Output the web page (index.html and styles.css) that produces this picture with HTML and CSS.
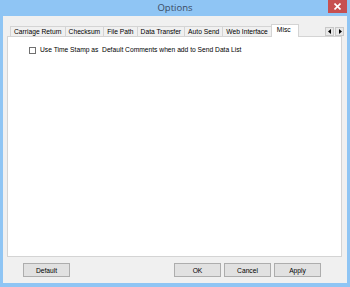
FILE: index.html
```html
<!DOCTYPE html>
<html>
<head>
<meta charset="utf-8">
<link rel="stylesheet" href="styles.css">
</head>
<body>
<div class="window">
  <div class="titlebar">
    <span></span>
    <span class="title">Options</span>
    <span class="close"><svg width="7" height="7" viewBox="0 0 7 7"><path d="M0.5 0.5L6.5 6.5M6.5 0.5L0.5 6.5" stroke="#fff" stroke-width="1.6"/></svg></span>
  </div>
  <div class="client">
    <div class="tabrow">
      <div class="tabs">
        <div class="tab">Carriage Return</div>
        <div class="tab">Checksum</div>
        <div class="tab">File Path</div>
        <div class="tab">Data Transfer</div>
        <div class="tab">Auto Send</div>
        <div class="tab">Web Interface</div>
        <div class="tab active">Misc</div>
      </div>
      <div class="arrows">
        <span class="arr"><svg width="4" height="5" viewBox="0 0 4 5"><path d="M3 0L0 2.5L3 5Z" fill="#000"/></svg></span>
        <span class="arr"><svg width="4" height="5" viewBox="0 0 4 5"><path d="M1 0L4 2.5L1 5Z" fill="#000"/></svg></span>
      </div>
    </div>
    <div class="panel">
      <label class="check"><span class="box"></span><span>Use Time Stamp as&nbsp; Default Comments when add to Send Data List</span></label>
    </div>
    <div class="buttons">
      <button class="btn">Default</button>
      <span class="spacer"></span>
      <button class="btn">OK</button>
      <button class="btn">Cancel</button>
      <button class="btn">Apply</button>
    </div>
  </div>
</div>
</body>
</html>
```

FILE: styles.css
```css
* { box-sizing: border-box; }
html, body { margin: 0; padding: 0; }
body {
  width: 350px;
  height: 287px;
  background: #8fc5f4;
  font-family: "Liberation Sans", Arial, sans-serif;
  font-size: 6.7px;
  color: #000;
  overflow: hidden;
}
.window {
  display: flex;
  flex-direction: column;
  height: 287px;
  padding: 0 3px 4px 3px;
}
.titlebar {
  height: 16px;
  display: grid;
  grid-template-columns: 1fr auto 1fr;
  align-items: start;
}
.title {
  font-family: "Open Sans", "Noto Sans", sans-serif;
  font-size: 9.5px;
  color: #3a4a63;
  line-height: 16px;
}
.close {
  justify-self: end;
  width: 19px;
  height: 13px;
  background: #c75050;
  display: flex;
  align-items: center;
  justify-content: center;
}
.client {
  flex: 1;
  background: #f0f0f0;
  display: flex;
  flex-direction: column;
  padding: 8px 4px 6px 4px;
}
.tabrow {
  height: 12px;
  display: flex;
  align-items: flex-end;
  padding-left: 3px;
  position: relative;
  z-index: 1;
}
.tabs {
  display: flex;
  align-items: flex-end;
  flex: 1;
}
.tab {
  height: 10px;
  padding: 0 3px;
  border: 1px solid #d4d4d4;
  border-bottom: none;
  border-right: none;
  background: #f0f0f0;
  line-height: 9px;
  white-space: nowrap;
}
.tab.active {
  height: 13px;
  margin-bottom: -1px;
  background: #fff;
  border-right: 1px solid #d4d4d4;
  padding: 0 7px 0 5px;
  line-height: 10px;
}
.arrows {
  display: flex;
  gap: 1px;
  align-self: center;
  margin-top: 2px;
  margin-right: -1px;
}
.arr {
  width: 9px;
  height: 9px;
  border: 1px solid #c8c8c8;
  background: #e8e8e8;
  display: flex;
  align-items: center;
  justify-content: center;
}
.panel {
  height: 221px;
  background: #fff;
  border: 1px solid #d4d4d4;
  margin-right: 1px;
  padding: 9px 0 0 21px;
}
.check {
  display: flex;
  align-items: center;
  gap: 4px;
  line-height: 8px;
}
.box {
  width: 7px;
  height: 7px;
  border: 1px solid #707070;
  background: #fff;
}
.buttons {
  margin-top: 6px;
  display: flex;
  gap: 3px;
  padding: 0 22px 0 16px;
}
.spacer { flex: 1; }
.btn {
  width: 47px;
  height: 14px;
  padding: 0;
  border: 1px solid #adadad;
  background: #e1e1e1;
  font-family: "Liberation Sans", Arial, sans-serif;
  font-size: 6.7px;
  color: #000;
}
```
